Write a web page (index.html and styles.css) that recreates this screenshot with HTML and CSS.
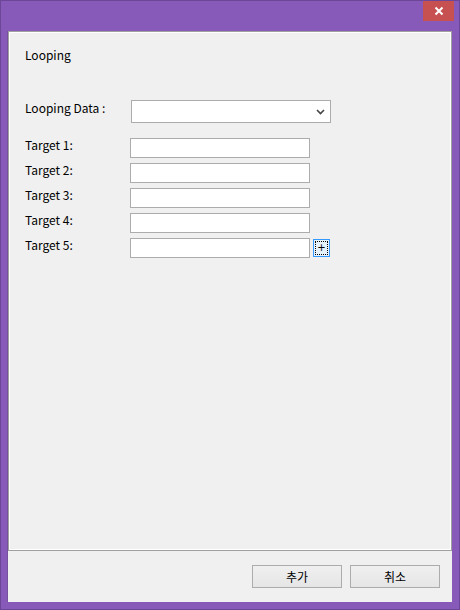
FILE: index.html
```html
<!DOCTYPE html>
<html>
<head>
<meta charset="utf-8">
<link rel="stylesheet" href="styles.css">
</head>
<body>
<div class="window">
  <div class="titlebar">
    <div class="close">
      <svg width="10" height="10" viewBox="0 0 10 10"><path d="M1.5 1.5 L8.5 8.5 M8.5 1.5 L1.5 8.5" stroke="#fff" stroke-width="2" fill="none"/></svg>
    </div>
  </div>
  <div class="client">
    <div class="panel">
      <div class="title">Looping</div>
      <div class="row row-combo">
        <div class="label">Looping Data :</div>
        <div class="combo">
          <svg class="chev" width="9" height="6" viewBox="0 0 9 6"><path d="M1 1 L4.5 4.5 L8 1" stroke="#444" stroke-width="1.6" fill="none"/></svg>
        </div>
      </div>
      <div class="targets">
        <div class="row"><div class="label">Target 1:</div><div class="textbox"></div></div>
        <div class="row"><div class="label">Target 2:</div><div class="textbox"></div></div>
        <div class="row"><div class="label">Target 3:</div><div class="textbox"></div></div>
        <div class="row"><div class="label">Target 4:</div><div class="textbox"></div></div>
        <div class="row"><div class="label">Target 5:</div><div class="textbox"></div>
          <div class="plus"><div class="focus">+</div></div>
        </div>
      </div>
    </div>
    <div class="footer">
      <div class="btn">추가</div>
      <div class="btn">취소</div>
    </div>
  </div>
</div>
</body>
</html>
```

FILE: styles.css
```css
html, body {
  margin: 0;
  padding: 0;
}
body {
  width: 460px;
  height: 610px;
  font-family: "Noto Sans CJK KR", "Noto Sans", sans-serif;
  font-size: 12px;
  color: #000;
}
.window {
  box-sizing: border-box;
  width: 460px;
  height: 610px;
  background: #8759b8;
  border: 1px solid #6c4797;
  display: flex;
  flex-direction: column;
}
.titlebar {
  height: 30px;
  display: flex;
  justify-content: flex-end;
  padding-right: 5px;
}
.close {
  width: 31px;
  height: 20px;
  background: #c75050;
  display: flex;
  align-items: center;
  justify-content: center;
}
.client {
  flex: 1;
  margin: 0 7px 7px 7px;
  background: #f0f0f0;
  display: flex;
  flex-direction: column;
  box-shadow: -1px 0 0 #75519f;
}
.panel {
  box-sizing: border-box;
  height: 520px;
  border: 1px solid #a0a0a0;
  box-shadow: inset 1px 1px 0 #fff, inset -1px -1px 0 #fff;
  padding: 15px 16px 0 16px;
}
.title {
  line-height: 16px;
  height: 16px;
}
.row {
  display: flex;
  align-items: flex-start;
}
.label {
  line-height: 16px;
  width: 105px;
  flex: none;
}
.row-combo {
  margin-top: 37px;
}
.combo {
  box-sizing: border-box;
  margin-left: 1px;
  width: 200px;
  height: 23px;
  border: 1px solid #acacac;
  background: #fff;
  display: flex;
  align-items: center;
  justify-content: flex-end;
  padding-right: 5px;
}
.targets {
  margin-top: 15px;
  display: flex;
  flex-direction: column;
  gap: 5px;
}
.targets .label {
  margin-top: -1px;
}
.textbox {
  box-sizing: border-box;
  width: 180px;
  height: 20px;
  border: 1px solid #acacac;
  background: #fff;
}
.plus {
  box-sizing: border-box;
  margin-left: 3px;
  margin-top: 1px;
  width: 17px;
  height: 18px;
  border: 1px solid #3399ff;
  background: #e5f1fb;
  padding: 1px;
  display: flex;
}
.focus {
  flex: 1;
  border: 1px dotted #000;
  font-size: 10px;
  line-height: 12px;
  text-align: center;
  font-family: "DejaVu Sans", sans-serif;
}
.footer {
  flex: 1;
  display: flex;
  justify-content: flex-end;
  align-items: flex-start;
  gap: 8px;
  padding: 14px 12px 0 0;
}
.btn {
  box-sizing: border-box;
  width: 90px;
  height: 23px;
  border: 1px solid #acacac;
  background: linear-gradient(#f0f0f0, #e5e5e5);
  display: flex;
  align-items: center;
  justify-content: center;
  line-height: 16px;
}
```
